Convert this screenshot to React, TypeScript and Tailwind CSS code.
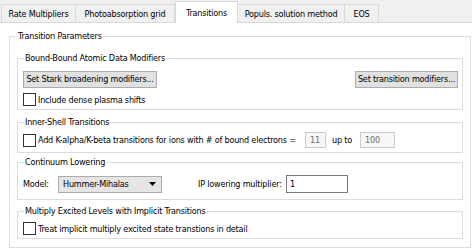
import React from "react";

interface GroupProps {
  title: string;
  className?: string;
  legendClass?: string;
  children?: React.ReactNode;
}

const Group = ({ title, className = "", legendClass = "ml-[1px]", children }: GroupProps) => (
  <fieldset className={`border border-[#dcdcdc] ${className}`}>
    <legend className={`px-[1px] leading-[12px] ${legendClass}`}>{title}</legend>
    {children}
  </fieldset>
);

const Check = () => (
  <span className="inline-block w-[13px] h-[13px] shrink-0 border border-[#333333] bg-white" />
);

const tabs = [
  { label: "Rate Multipliers", w: "w-[75px]" },
  { label: "Photoabsorption grid", w: "w-[99px]" },
  { label: "Transitions", w: "w-[63px]", active: true },
  { label: "Populs. solution method", w: "w-[107px]" },
  { label: "EOS", w: "w-[34px]" },
];

export default function App() {
  return (
    <div className="w-[472px] h-[248px] overflow-hidden bg-white text-black text-[9px] leading-[12px] tracking-[-0.2px] font-['DejaVu_Sans_Condensed','Liberation_Sans',sans-serif]">
      {/* tab strip */}
      <div className="flex items-end h-[23px] pl-[1px] bg-[#f0f0f0] border-b border-[#d9d9d9]">
        {tabs.map((t) =>
          t.active ? (
            <div
              key={t.label}
              className={`${t.w} h-[22px] -mb-px flex items-center justify-center bg-white border border-b-0 border-[#d9d9d9] relative z-10`}
            >
              {t.label}
            </div>
          ) : (
            <div
              key={t.label}
              className={`${t.w} h-[18px] flex items-center justify-center bg-[#f0f0f0] border border-b-0 border-l-0 first:border-l border-[#d9d9d9]`}
            >
              {t.label}
            </div>
          )
        )}
      </div>

      <Group
        title="Transition Parameters"
        legendClass="ml-0"
        className="mt-[7px] ml-[9px] w-[462px] px-[7px] pt-[10px] pb-[8px] flex flex-col"
      >
        <Group title="Bound-Bound Atomic Data Modifiers" className="pt-[7px] pb-[3px] pl-[5px] pr-[4px]">
          <div className="flex justify-between">
            <button className="w-[134px] h-[17px] bg-[#e1e1e1] border border-[#adadad] leading-[15px]">
              Set Stark broadening modifiers...
            </button>
            <button className="w-[103px] h-[17px] bg-[#e1e1e1] border border-[#adadad] leading-[15px]">
              Set transition modifiers...
            </button>
          </div>
          <label className="mt-[5px] flex items-center gap-[2px] h-[13px]">
            <Check />
            <span>Include dense plasma shifts</span>
          </label>
        </Group>

        <Group title="Inner-Shell Transitions" className="mt-[6px] pt-[4px] pb-[4px] pl-[5px]">
          <div className="flex items-center h-[16px]">
            <Check />
            <span className="ml-[2px] w-[267px] whitespace-nowrap">
              Add K-alpha/K-beta transitions for ions with # of bound electrons =
            </span>
            <div className="w-[21px] h-[16px] pl-[4px] bg-[#f7f7f7] border border-[#cccccc] text-[#6d6d6d] leading-[14px]">
              11
            </div>
            <span className="ml-[6px] w-[28px]">up to</span>
            <div className="w-[35px] h-[16px] pl-[4px] bg-[#f7f7f7] border border-[#cccccc] text-[#6d6d6d] leading-[14px]">
              100
            </div>
          </div>
        </Group>

        <Group title="Continuum Lowering" className="mt-[3px] pt-[7px] pb-[6px] pl-[5px]">
          <div className="flex items-center h-[18px]">
            <span className="w-[35px]">Model:</span>
            <div className="w-[104px] h-[17px] flex items-center justify-between pl-[4px] pr-[5px] bg-[#e5e5e5] border border-[#acacac]">
              <span>Hummer-Mihalas</span>
              <svg width="7" height="4" viewBox="0 0 7 4">
                <path d="M0 0H7L3.5 4Z" fill="#000" />
              </svg>
            </div>
            <span className="ml-[36px] w-[88px] whitespace-nowrap">IP lowering multiplier:</span>
            <div className="w-[62px] h-[18px] pl-[3px] bg-white border border-[#7a7a7a] leading-[16px]">1</div>
          </div>
        </Group>

        <Group
          title="Multiply Excited Levels with Implicit Transitions"
          className="mt-[5px] pt-[5px] pb-[3px] pl-[5px]"
        >
          <label className="flex items-center gap-[2px] h-[13px]">
            <Check />
            <span>Treat implicit multiply excited state transtions in detail</span>
          </label>
        </Group>
      </Group>
    </div>
  );
}
